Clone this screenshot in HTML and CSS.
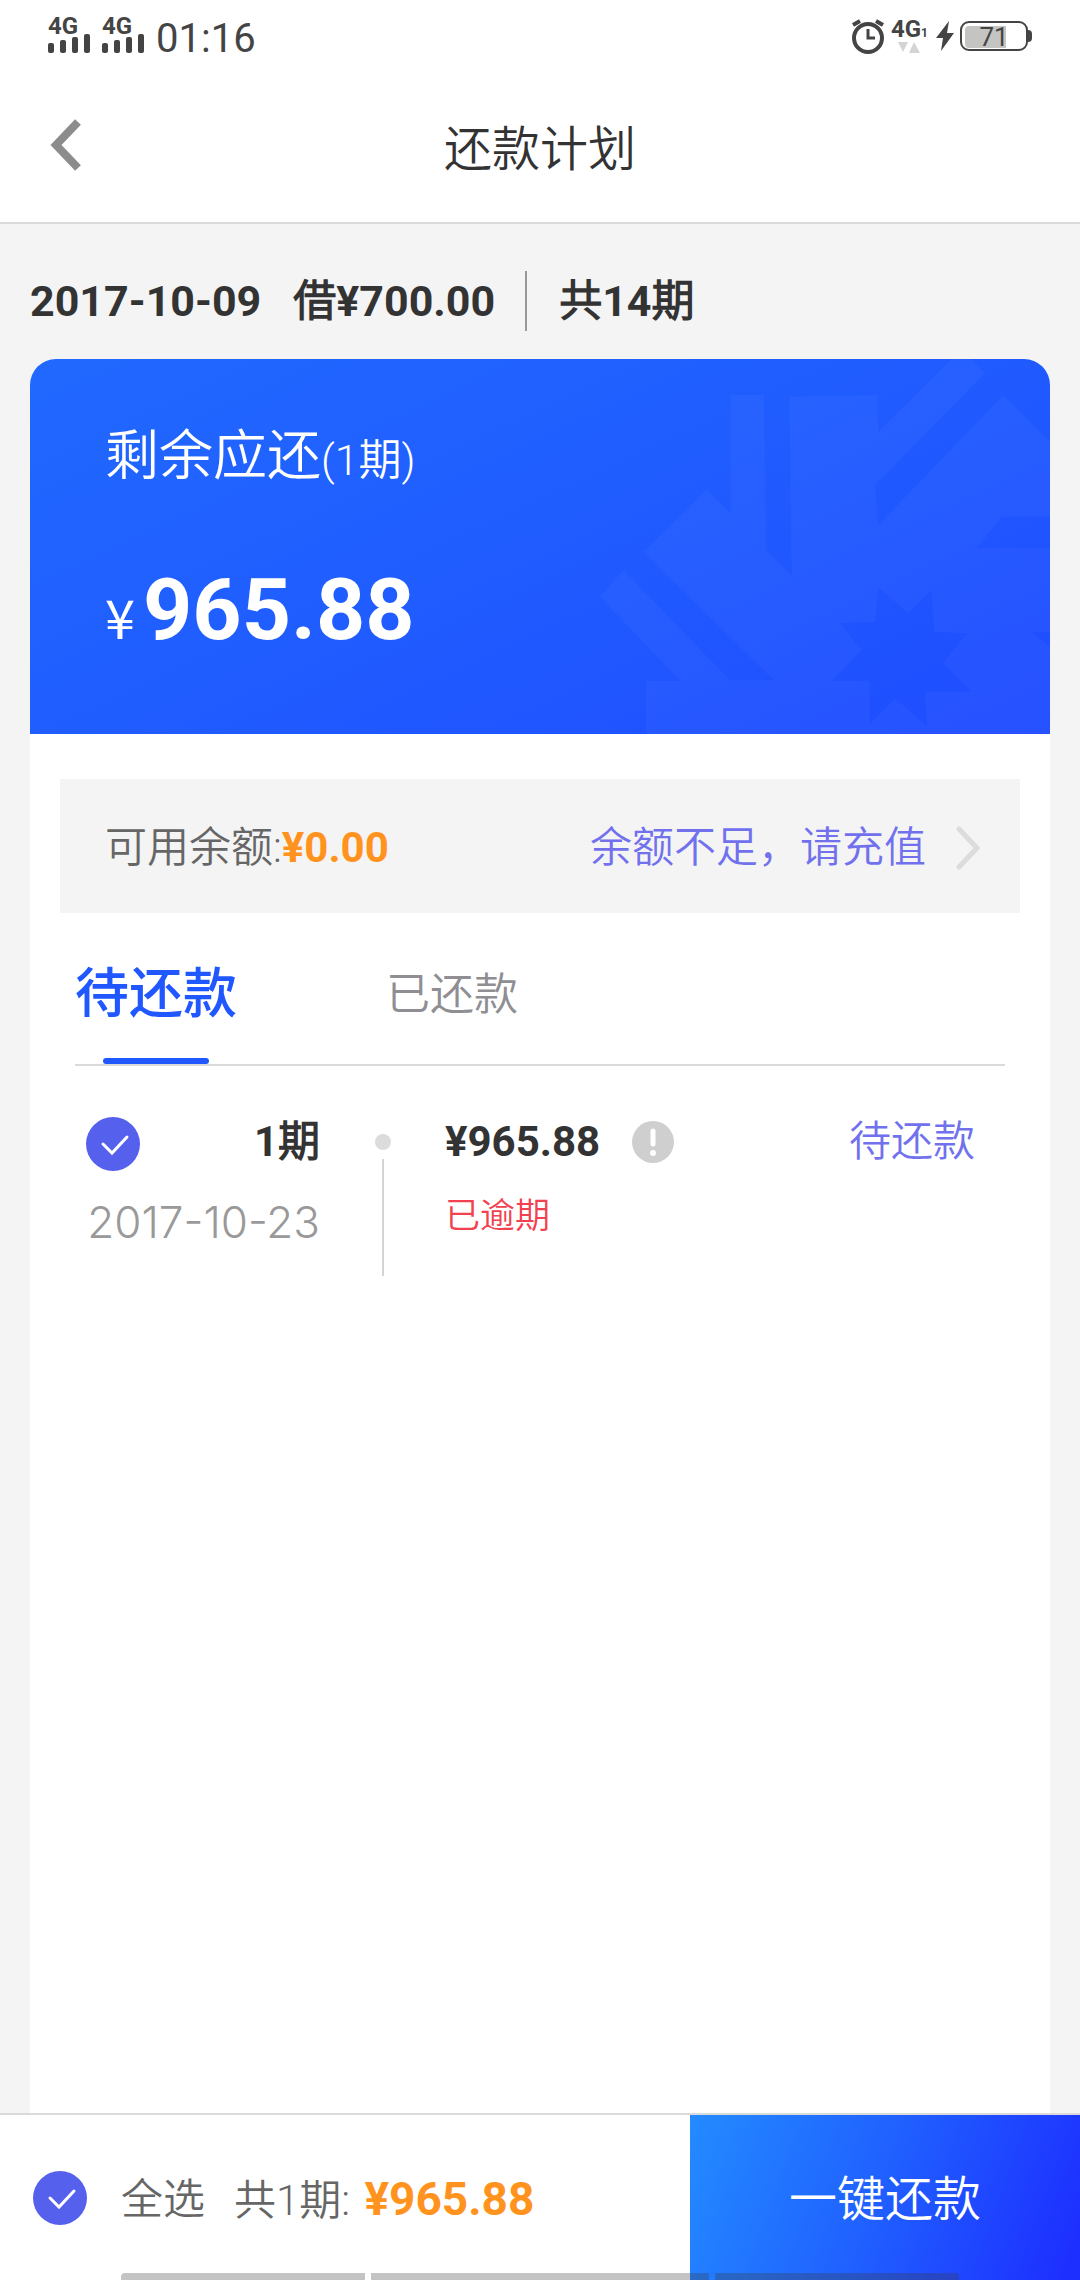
FILE: index.html
```html
<!DOCTYPE html>
<html lang="zh-CN">
<head>
<meta charset="utf-8">
<meta name="viewport" content="width=device-width, initial-scale=1">
<title>还款计划</title>
<link rel="stylesheet" href="styles.css">
</head>
<body>
<div class="page">
  <div class="status">
    <div class="status-side">
      <div class="signal"><span class="net">4G</span>
        <svg width="42" height="19" viewBox="0 0 42 19" fill="#444" aria-hidden="true"><rect y="9" width="6" height="10" rx="2"/><rect x="12" y="6" width="6" height="13" rx="2"/><rect x="24" y="3" width="6" height="16" rx="2"/><rect x="36" width="6" height="19" rx="2"/></svg>
      </div>
      <div class="signal"><span class="net">4G</span>
        <svg width="42" height="19" viewBox="0 0 42 19" fill="#444" aria-hidden="true"><rect y="9" width="6" height="10" rx="2"/><rect x="12" y="6" width="6" height="13" rx="2"/><rect x="24" y="3" width="6" height="16" rx="2"/><rect x="36" width="6" height="19" rx="2"/></svg>
      </div>
      <time class="clock">01:16</time>
    </div>
    <div class="status-side status-right">
      <svg width="34" height="36" viewBox="0 0 34 36" fill="none" stroke="#444" stroke-width="4" aria-hidden="true"><circle cx="17" cy="19" r="14"/><path d="M17 10v9h7" stroke-width="3"/><path d="M2 6l7-4M32 6l-7-4"/></svg>
      <div class="data">
        <span class="net">4G<small>1</small></span>
        <svg width="22" height="11" viewBox="0 0 22 11" fill="#d4d4d4" aria-hidden="true"><path d="M0 0h10L5 10zM11 11h11L16 0z"/></svg>
      </div>
      <svg class="bolt" width="18" height="30" viewBox="0 0 18 30" fill="#444" aria-hidden="true"><path d="M13 0L0 17h7L5 30 18 12h-7z"/></svg>
      <div class="battery"><span class="level" style="width:71%"></span><span class="percent">71</span></div>
    </div>
  </div>

  <header class="bar">
    <button class="back" type="button" aria-label="返回">
      <svg width="32" height="54" viewBox="0 0 32 54" fill="none" stroke="#8c8c8c" stroke-width="8" aria-hidden="true"><path d="M28 4L6 27l22 23"/></svg>
    </button>
    <h1>还款计划</h1>
  </header>

  <main>
    <div class="loan"><span class="loan-date">2017-10-09</span><span>借¥700.00</span><span class="loan-terms">共14期</span></div>

    <div class="panel">
      <section class="card">
        <svg class="pattern" width="490" height="375" viewBox="0 57 1470 1125" fill="#fff" fill-opacity=".03" fill-rule="evenodd" aria-hidden="true"><path d="M440 450L512 520V165H612L618 630 695 705 688 170 950 165 955 275 1175 57H1235L1275 100 945 435 955 555 1330 165 1470 305V530H1325L1250 625H1470V875H1415L1470 920V1182H258V1022H360L120 770 190 690 510 1020H640L250 635ZM955 742L1045 820 1115 750 1122 875 1222 880 1150 970 1235 1055 1095 1055 1100 1158 1005 1075 930 1152 928 1022H815L905 930 840 850 945 845Z"/></svg>
        <h2>剩余应还<small>(1期)</small></h2>
        <p class="total"><span class="yen">¥</span>965.88</p>
      </section>

      <div class="balance">
        <p>可用余额:<b>¥0.00</b></p>
        <a href="#recharge">余额不足，请充值
          <svg width="24" height="44" viewBox="0 0 24 44" fill="none" stroke="#dcdcdc" stroke-width="5" stroke-linecap="round" aria-hidden="true"><path d="M3 3l18 19L3 41"/></svg>
        </a>
      </div>

      <nav class="tabs">
        <button class="tab active" type="button">待还款</button>
        <button class="tab" type="button">已还款</button>
      </nav>

      <div class="term">
        <div class="term-when">
          <div class="term-head">
            <label class="check"><input type="checkbox" checked aria-label="选择第1期"><svg viewBox="0 0 54 54" fill="none" stroke="#fff" stroke-width="3" stroke-linecap="round" aria-hidden="true"><path d="M17 27l9 9 15-16"/></svg></label>
            <strong>1期</strong>
          </div>
          <time class="term-date">2017-10-23</time>
        </div>
        <div class="rail"><span class="dot"></span><span class="line"></span></div>
        <div class="term-amount">
          <div class="price"><strong>¥965.88</strong>
            <svg width="42" height="42" viewBox="0 0 42 42" aria-hidden="true"><circle cx="21" cy="21" r="21" fill="#cfcfcf"/><path d="M21 10v13" stroke="#fff" stroke-width="5" stroke-linecap="round"/><circle cx="21" cy="32" r="3" fill="#fff"/></svg>
          </div>
          <p class="overdue">已逾期</p>
        </div>
        <span class="state">待还款</span>
      </div>
    </div>
  </main>

  <footer class="pay">
    <label class="check"><input type="checkbox" checked><svg viewBox="0 0 54 54" fill="none" stroke="#fff" stroke-width="3" stroke-linecap="round" aria-hidden="true"><path d="M17 27l9 9 15-16"/></svg><span>全选</span></label>
    <p class="sum">共1期: <b>¥965.88</b></p>
    <button class="submit" type="button">一键还款</button>
    <div class="gesture" aria-hidden="true"><span></span><span class="wide"></span><span></span></div>
  </footer>
</div>
</body>
</html>
```
FILE: styles.css
```css
* { box-sizing: border-box; margin: 0; }
body {
  background: #f4f4f4;
  color: #333;
  font: 350 42px/56px Roboto, "Noto Sans CJK SC DemiLight", "Noto Sans CJK SC", sans-serif;
}
button { border: 0; padding: 0; background: none; font: inherit; color: inherit; }
a { color: inherit; text-decoration: none; }
svg { display: block; flex: none; }
b, strong { font-weight: 700; }
.page { min-height: 100vh; display: flex; flex-direction: column; }

/* status bar */
.status {
  display: flex;
  justify-content: space-between;
  height: 76px;
  padding: 16px 52px 0 48px;
  background: #fff;
  color: #444;
}
.status-side { display: flex; gap: 12px; }
.signal { width: 42px; height: 37px; display: flex; flex-direction: column; justify-content: space-between; }
.net { font: 700 24px/20px Roboto, sans-serif; height: 17px; white-space: nowrap; }
.net small { font-size: 12px; }
.clock { font-size: 40px; font-weight: 400; line-height: 46px; }
.status-right { gap: 6px; padding-top: 3px; }
.data { display: flex; flex-direction: column; align-items: center; gap: 6px; }
.bolt { margin: 2px 0 0 2px; }
.battery {
  position: relative;
  width: 68px;
  height: 30px;
  margin-top: 2px;
  padding: 3px;
  border: 2px solid #444;
  border-radius: 9px;
  display: grid;
}
.battery::after {
  content: "";
  position: absolute;
  right: -6px;
  top: 7px;
  width: 4px;
  height: 12px;
  border-radius: 0 4px 4px 0;
  background: #444;
}
.level, .percent { grid-area: 1 / 1; }
.level { background: #c4c4c2; border-radius: 4px 0 0 4px; }
.percent { text-align: center; font: 400 26px/22px Roboto, sans-serif; }

/* title bar */
.bar {
  display: grid;
  grid-template-columns: 100px 1fr 100px;
  align-items: center;
  height: 148px;
  background: #fff;
  border-bottom: 2px solid #dadada;
}
.back { padding-left: 50px; height: 64px; align-self: start; margin-top: 37px; }
.bar h1 { padding-top: 2px; text-align: center; font-size: 48px; font-weight: 400; }

main { flex: 1; display: flex; flex-direction: column; padding: 0 30px; }
.loan { display: flex; align-items: center; height: 135px; padding-top: 18px; font-size: 43px; font-weight: 700; line-height: 60px; }
.loan-date { margin-right: 32px; }
.loan-terms { margin-left: 30px; padding-left: 32px; border-left: 2px solid #999; }

.panel { flex: 1; background: #fff; border-radius: 26px 26px 0 0; }
.card {
  position: relative;
  height: 375px;
  padding: 60px 75px 0;
  border-radius: 26px 26px 0 0;
  overflow: hidden;
  color: #fff;
  background: linear-gradient(155deg, #2169ff, #205cff 50%, #1f4cff);
}
.pattern { position: absolute; right: 0; bottom: 0; }
.card h2 { font-size: 54px; font-weight: 350; line-height: 76px; }
.card small { font-size: 43px; }
.total { margin-top: 64px; font-size: 86px; font-weight: 700; line-height: 96px; }
.yen { font-size: 54px; font-weight: 400; font-family: "Noto Sans CJK SC", sans-serif; margin-right: 8px; }

.balance {
  display: flex;
  justify-content: space-between;
  align-items: center;
  height: 134px;
  margin: 45px 30px 0;
  padding: 4px 40px 0 45px;
  background: #f4f4f4;
  color: #666;
}
.balance b, .sum b { color: #ff931e; }
.balance a { display: flex; align-items: center; gap: 30px; color: #7171ee; }

.tabs {
  display: flex;
  gap: 149px;
  height: 153px;
  margin: 0 45px;
  border-bottom: 2px solid #dadada;
  color: #8e8e93;
}
.tab { position: relative; font-size: 44px; height: 151px; padding-top: 12px; }
.tab.active { font-family: Roboto, "Noto Sans CJK SC", sans-serif; font-size: 54px; font-weight: 500; color: #2157ff; }
.tab.active::after {
  content: "";
  position: absolute;
  left: 28px;
  right: 28px;
  bottom: 0;
  height: 6px;
  border-radius: 3px;
  background: #2157ff;
}

.term { display: flex; margin: 0 75px 0 56px; padding-top: 48px; }
.term-when { width: 234px; }
.term-head { display: flex; justify-content: space-between; }
.term-date { display: block; margin-top: 20px; text-align: right; color: #999; font-family: Inter, sans-serif; font-size: 44px; font-weight: 300; }
.check { display: grid; grid-template-columns: 54px auto; align-items: center; height: 60px; column-gap: 34px; }
.check input { appearance: none; grid-area: 1 / 1; width: 54px; height: 54px; margin: 0; border-radius: 50%; background: #5560ec; }
.check svg { grid-area: 1 / 1; width: 54px; height: 54px; pointer-events: none; }
.term-head .check { column-gap: 0; }
.rail { width: 16px; margin: 20px 54px 0 55px; display: flex; flex-direction: column; align-items: center; gap: 9px; }
.dot { width: 16px; height: 16px; border-radius: 50%; background: #dcdcdc; }
.line { width: 2px; height: 117px; background: #d4d4d4; }
.price { display: flex; align-items: center; gap: 32px; }
.overdue { margin-top: 21px; font-size: 35px; line-height: 52px; color: #f2414f; }
.state { margin-left: auto; color: #7171ee; }

/* payment bar */
.pay {
  position: sticky;
  bottom: 0;
  display: flex;
  align-items: center;
  height: 167px;
  padding-left: 33px;
  background: #fff;
  border-top: 2px solid #dadada;
  color: #666;
}
.check span, .sum { padding-top: 4px; }
.sum { margin-left: 29px; white-space: nowrap; }
.sum b { margin-left: 4px; font-size: 46px; }
.submit {
  width: 390px;
  height: 100%;
  padding-top: 4px;
  margin-left: auto;
  font-size: 48px;
  font-weight: 400;
  color: #fff;
  background: linear-gradient(110deg, #238bff, #2060ff 48%, #1d2fff 96%);
}
.gesture { position: absolute; left: 121px; right: 121px; bottom: 0; display: flex; gap: 6px; height: 7px; }
.gesture span { flex: 244; background: rgba(60, 60, 60, .3); border-radius: 4px 0 0 0; }
.gesture .wide { flex: 338; border-radius: 0; }
.gesture span:last-child { border-radius: 0 4px 0 0; }
```
